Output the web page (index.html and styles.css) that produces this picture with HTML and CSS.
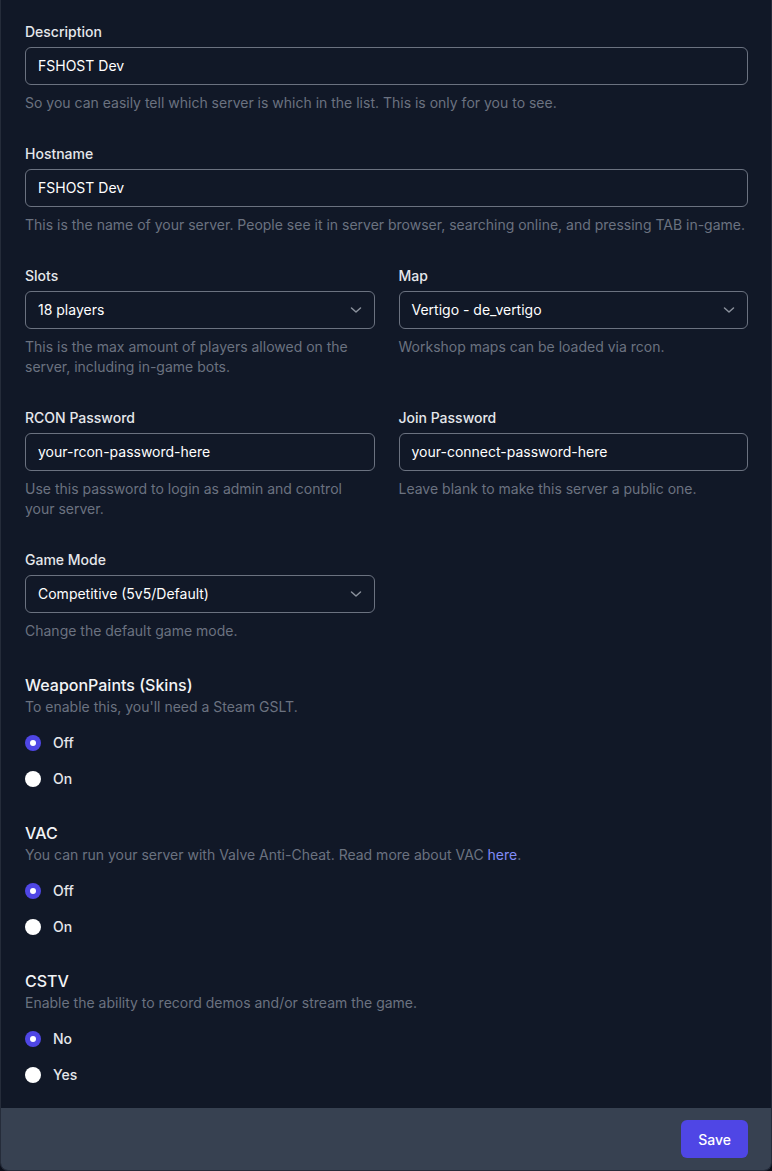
FILE: index.html
```html
<!DOCTYPE html>
<html lang="en">
<head>
<meta charset="utf-8">
<title>Server settings</title>
<link rel="stylesheet" href="styles.css">
</head>
<body>
<form class="card">
  <div class="card-body">
    <div class="field">
      <label class="label">Description</label>
      <div class="input">FSHOST Dev</div>
      <p class="help">So you can easily tell which server is which in the list. This is only for you to see.</p>
    </div>
    <div class="field">
      <label class="label">Hostname</label>
      <div class="input">FSHOST Dev</div>
      <p class="help">This is the name of your server. People see it in server browser, searching online, and pressing TAB in-game.</p>
    </div>
    <div class="row">
      <div class="field">
        <label class="label">Slots</label>
        <div class="input select">18 players
          <svg class="chev" width="12" height="8" viewBox="0 0 12 8"><path d="M1.5 2l4.5 4 4.5-4" fill="none" stroke="#8b919c" stroke-width="1.5" stroke-linecap="round" stroke-linejoin="round"/></svg>
        </div>
        <p class="help">This is the max amount of players allowed on the server, including in-game bots.</p>
      </div>
      <div class="field">
        <label class="label">Map</label>
        <div class="input select">Vertigo - de_vertigo
          <svg class="chev" width="12" height="8" viewBox="0 0 12 8"><path d="M1.5 2l4.5 4 4.5-4" fill="none" stroke="#8b919c" stroke-width="1.5" stroke-linecap="round" stroke-linejoin="round"/></svg>
        </div>
        <p class="help">Workshop maps can be loaded via rcon.</p>
      </div>
    </div>
    <div class="row">
      <div class="field">
        <label class="label">RCON Password</label>
        <div class="input">your-rcon-password-here</div>
        <p class="help">Use this password to login as admin and control your server.</p>
      </div>
      <div class="field">
        <label class="label">Join Password</label>
        <div class="input">your-connect-password-here</div>
        <p class="help">Leave blank to make this server a public one.</p>
      </div>
    </div>
    <div class="row">
      <div class="field">
        <label class="label">Game Mode</label>
        <div class="input select">Competitive (5v5/Default)
          <svg class="chev" width="12" height="8" viewBox="0 0 12 8"><path d="M1.5 2l4.5 4 4.5-4" fill="none" stroke="#8b919c" stroke-width="1.5" stroke-linecap="round" stroke-linejoin="round"/></svg>
        </div>
        <p class="help">Change the default game mode.</p>
      </div>
      <div></div>
    </div>

    <fieldset class="group first-group">
      <legend class="heading">WeaponPaints (Skins)</legend>
      <p class="sub">To enable this, you'll need a Steam GSLT.</p>
      <div class="options">
        <div class="option"><span class="radio checked"></span><span class="opt-label">Off</span></div>
        <div class="option"><span class="radio"></span><span class="opt-label">On</span></div>
      </div>
    </fieldset>

    <fieldset class="group">
      <legend class="heading">VAC</legend>
      <p class="sub">You can run your server with Valve Anti-Cheat. Read more about VAC <a class="link" href="#">here</a>.</p>
      <div class="options">
        <div class="option"><span class="radio checked"></span><span class="opt-label">Off</span></div>
        <div class="option"><span class="radio"></span><span class="opt-label">On</span></div>
      </div>
    </fieldset>

    <fieldset class="group">
      <legend class="heading">CSTV</legend>
      <p class="sub">Enable the ability to record demos and/or stream the game.</p>
      <div class="options">
        <div class="option"><span class="radio checked"></span><span class="opt-label">No</span></div>
        <div class="option"><span class="radio"></span><span class="opt-label">Yes</span></div>
      </div>
    </fieldset>
  </div>
  <div class="card-footer">
    <button type="button" class="btn">Save</button>
  </div>
</form>
</body>
</html>
```

FILE: styles.css
```css
* { box-sizing: border-box; }
html, body {
  margin: 0;
  padding: 0;
  background: #0b0f1a;
}
body {
  font-family: Inter, "Noto Sans", "Liberation Sans", sans-serif;
  font-size: 14px;
  line-height: 20px;
  color: #e5e7eb;
}
.card {
  width: 772px;
  height: 1171px;
  background: #111827;
  border: 1px solid #252c3a;
  border-top: none;
  border-radius: 0 0 8px 8px;
  overflow: hidden;
  display: flex;
  flex-direction: column;
}
.card-body {
  flex: 1;
  padding: 22px 23px 0 24px;
  display: flex;
  flex-direction: column;
  gap: 31px;
}
.row {
  display: grid;
  grid-template-columns: 1fr 1fr;
  column-gap: 24px;
}
.field { display: flex; flex-direction: column; }
.label {
  display: block;
  font-weight: 500;
  font-size: 14px;
  line-height: 20px;
  color: #e5e7eb;
  margin-bottom: 5px;
}
.input {
  position: relative;
  height: 38px;
  border: 1px solid #6b7280;
  border-radius: 6px;
  padding: 0 12px;
  display: flex;
  align-items: center;
  color: #ffffff;
  font-size: 14px;
}
.chev {
  position: absolute;
  right: 12px;
  top: 50%;
  margin-top: -4px;
}
.help {
  margin: 8px 0 0;
  color: #6b7280;
  font-size: 14px;
  line-height: 20px;
}
.group {
  border: none;
  margin: 0;
  padding: 0;
  min-width: 0;
}
.first-group { margin-top: 1px; }
.heading {
  padding: 0;
  font-size: 16px;
  line-height: 24px;
  font-weight: 500;
  color: #f3f4f6;
}
.group + .group { margin-top: -1px; }
.sub {
  margin: 0;
  color: #6b7280;
  line-height: 20px;
}
.link { color: #818cf8; text-decoration: none; }
.options {
  margin-top: 14px;
  display: flex;
  flex-direction: column;
  gap: 12px;
}
.option {
  display: flex;
  align-items: center;
  height: 24px;
  gap: 12px;
}
.radio {
  width: 16px;
  height: 16px;
  border-radius: 50%;
  background: #ffffff;
  flex: none;
  position: relative;
}
.radio.checked { background: #4f46e5; }
.radio.checked::after {
  content: "";
  position: absolute;
  left: 5px;
  top: 5px;
  width: 6px;
  height: 6px;
  border-radius: 50%;
  background: #ffffff;
}
.opt-label {
  font-weight: 500;
  color: #e5e7eb;
}
.card-footer {
  height: 62px;
  background: #374151;
  display: flex;
  justify-content: flex-end;
  align-items: center;
  padding: 0 23px;
}
.btn {
  height: 38px;
  padding: 0 17px;
  border: none;
  border-radius: 6px;
  background: #4f46e5;
  color: #ffffff;
  font-family: inherit;
  font-size: 14px;
  font-weight: 500;
}
```
